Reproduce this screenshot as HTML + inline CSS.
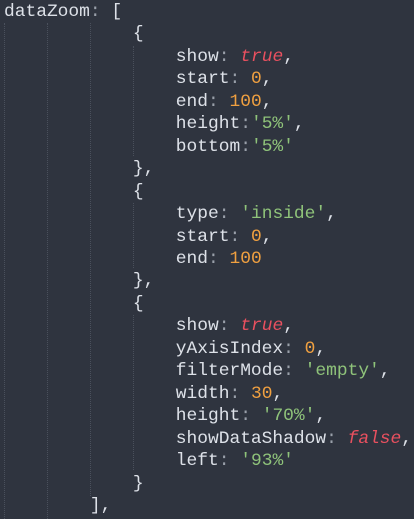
<!DOCTYPE html><html><head><style>
body{margin:0;background:#2f343f;width:414px;height:519px;overflow:hidden;position:relative}
pre{margin:0;position:absolute;left:4px;top:1px;font-family:"Liberation Mono",monospace;font-size:17.9px;line-height:22.45px;color:#dde1e8}
.r{color:#e8505f;font-style:italic}.o{color:#f0a040}.g{color:#8fc37a}.p{color:#9aa0aa}
.gd{position:absolute;width:0;border-left:1px dotted #4a505c}
</style></head><body>
<div class="gd" style="left:4px;top:23px;height:496px"></div>
<div class="gd" style="left:47px;top:23px;height:496px"></div>
<div class="gd" style="left:90px;top:23px;height:473px"></div>
<div class="gd" style="left:133px;top:46px;height:110px"></div>
<div class="gd" style="left:133px;top:203px;height:65px"></div>
<div class="gd" style="left:133px;top:315px;height:155px"></div>
<pre>dataZoom<span class="p">:</span> [
            {
                show<span class="p">:</span> <span class="r">true</span>,
                start<span class="p">:</span> <span class="o">0</span>,
                end<span class="p">:</span> <span class="o">100</span>,
                height<span class="p">:</span><span class="g">'5%'</span>,
                bottom<span class="p">:</span><span class="g">'5%'</span>
            },
            {
                type<span class="p">:</span> <span class="g">'inside'</span>,
                start<span class="p">:</span> <span class="o">0</span>,
                end<span class="p">:</span> <span class="o">100</span>
            },
            {
                show<span class="p">:</span> <span class="r">true</span>,
                yAxisIndex<span class="p">:</span> <span class="o">0</span>,
                filterMode<span class="p">:</span> <span class="g">'empty'</span>,
                width<span class="p">:</span> <span class="o">30</span>,
                height<span class="p">:</span> <span class="g">'70%'</span>,
                showDataShadow<span class="p">:</span> <span class="r">false</span>,
                left<span class="p">:</span> <span class="g">'93%'</span>
            }
        ],</pre>
</body></html>
